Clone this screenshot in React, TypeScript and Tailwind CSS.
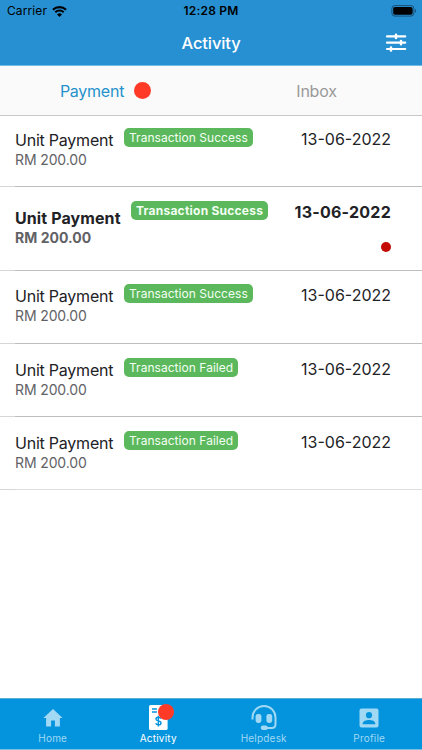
type Payment = { status: string; unread?: boolean; box: string };

const payments: Payment[] = [
  { status: "Transaction Success", box: "h-[70px] pt-[12px]" },
  { status: "Transaction Success", unread: true, box: "h-[83px] pt-[14px] font-bold" },
  { status: "Transaction Success", box: "h-[72px] pt-[13px]" },
  { status: "Transaction Failed", box: "h-[72px] pt-[14px]" },
  { status: "Transaction Failed", box: "h-[72px] pt-[14px]" },
];

function StatusBar() {
  return (
    <div className="grid h-[22px] grid-cols-3 items-center px-[7px] text-black">
      <div className="flex items-center gap-[5px] text-[12px] leading-[22px] tracking-[0.1px]">
        <span>Carrier</span>
        <svg width="15" height="11" viewBox="0 0 15 11" fill="none" stroke="currentColor">
          <path d="M.9 3.8a9.5 9.5 0 0 1 13.2 0" strokeWidth="2.1" />
          <path d="M3.3 6.3a6 6 0 0 1 8.4 0" strokeWidth="2" />
          <path d="M7.5 11 5 8.4a3.6 3.6 0 0 1 5 0z" fill="currentColor" stroke="none" />
        </svg>
      </div>
      <span className="text-center text-[12px] font-semibold tracking-[0.2px]">12:28 PM</span>
      <svg className="mr-[-2px] justify-self-end" width="26" height="12" viewBox="0 0 26 12">
        <rect x=".9" y=".6" width="22" height="10.5" rx="3" fill="none" stroke="#174f76" />
        <rect x="2.2" y="1.9" width="19.4" height="7.9" rx="1.8" />
        <path d="M24 4v3.8c1.6-.6 1.6-3.2 0-3.8z" fill="#174f76" />
      </svg>
    </div>
  );
}

function FilterIcon() {
  return (
    <svg width="22" height="20" viewBox="0 0 22 20" stroke="white" strokeLinecap="round">
      <path d="M2 3.4h18.2M2 9.7h18.2M2 16h18.2" strokeWidth="2.2" />
      <path d="M11 1.8v3.2M16 8.1v3.2M6 14.4v3.2" strokeWidth="2.5" />
    </svg>
  );
}

function PaymentRow({ status, unread, box }: Payment) {
  return (
    <div className={`flex ${box} pr-[31px] pl-[15px]`}>
      <div className={unread ? "w-[116px] pt-[6px]" : "w-[109px] pt-px"}>
        <div className={`text-[16px] leading-[22px] whitespace-nowrap text-[#222226] ${unread ? "tracking-[0.1px]" : "tracking-[-0.23px]"}`}>
          Unit Payment
        </div>
        <div className={`text-[14px] leading-[17px] whitespace-nowrap text-[#626266] ${unread ? "tracking-[0.03px]" : "tracking-[-0.12px]"}`}>RM 200.00</div>
      </div>
      <span className={`flex h-[19px] items-center rounded-[5px] bg-[#5cb85c] px-[5px] text-[12px] leading-[19px] whitespace-nowrap text-[#f3fff3] ${unread ? "tracking-[0.24px]" : "tracking-[0.04px]"}`}>
        {status}
      </span>
      <div className={`ml-auto flex flex-col items-end text-[16px] text-[#222226] ${unread ? "leading-[23px] tracking-[0.24px]" : "leading-[23px]"}`}>
        <span className="whitespace-nowrap">13-06-2022</span>
        {unread && <span className="mt-[18px] size-[10px] rounded-full bg-[#c40a05]" />}
      </div>
    </div>
  );
}

function HomeIcon() {
  return (
    <svg width="20" height="18" viewBox="0 0 20 18" fill="currentColor">
      <path d="M10 0 .4 9h2.7v8.4h5v-6h3.8v6h5V9h2.7z" />
    </svg>
  );
}

function ReceiptIcon() {
  return (
    <div className="relative h-[25px] w-[19px]">
      <svg width="19" height="25" viewBox="0 0 19 25">
        <rect width="18.6" height="25" rx="1.6" fill="white" />
        <path d="M3 4h5M3 7h5" stroke="#0494dd" strokeWidth="1.4" />
        <path d="M11.8 13.6c-.5-1-1.4-1.3-2.5-1.3-1.5 0-2.4.7-2.4 1.8 0 2.7 5.1 1 5.1 3.8 0 1.2-1 1.9-2.5 1.9-1.4 0-2.4-.5-2.8-1.6M9.3 10.8v10.8" fill="none" stroke="#0494dd" strokeWidth="1.4" />
      </svg>
      <span className="absolute top-[-1px] left-[9.5px] size-[16px] rounded-full bg-[#ff3b28]" />
    </div>
  );
}

function HeadsetIcon() {
  return (
    <svg width="26" height="26" viewBox="0 0 26 26" fill="currentColor">
      <path d="M1.5 14.5v-2a11.2 11.2 0 0 1 23 0v6.8q0 3.7-3.6 3.7h-5" fill="none" stroke="currentColor" strokeWidth="2" />
      <rect x="4.6" y="8.9" width="5.8" height="9" rx="2.3" />
      <rect x="15.4" y="8.9" width="5.8" height="9" rx="2.3" />
      <rect x="9.8" y="20.6" width="7" height="4.4" rx="2.1" />
    </svg>
  );
}

function ProfileIcon() {
  return (
    <svg width="20" height="20" viewBox="0 0 20 20">
      <rect x=".5" y=".5" width="19" height="19" rx="2" fill="currentColor" />
      <circle cx="10" cy="7.2" r="3.1" fill="#0494dd" />
      <path d="M3.8 16.2v-1c0-2.1 3.3-3.3 6.2-3.3s6.2 1.2 6.2 3.3v1z" fill="#0494dd" />
    </svg>
  );
}

const tabs = [
  { label: "Home", Icon: HomeIcon },
  { label: "Activity", Icon: ReceiptIcon, active: true },
  { label: "Helpdesk", Icon: HeadsetIcon },
  { label: "Profile", Icon: ProfileIcon },
];

export default function App() {
  return (
    <div className="flex h-[750px] w-[422px] flex-col overflow-hidden bg-white font-[Inter,sans-serif]">
      <header className="h-[66px] border-b border-[#74bde8] bg-[#2790d2]">
        <StatusBar />
        <div className="grid h-[42px] grid-cols-[1fr_auto_1fr] items-center px-[15px] text-white">
          <span />
          <h1 className="text-[16.5px] font-medium tracking-[-0.1px]">Activity</h1>
          <div className="justify-self-end"><FilterIcon /></div>
        </div>
      </header>
      <nav className="grid h-[50px] grid-cols-2 border-b border-[#c9c7c7] bg-[#fafafa] text-[16px] tracking-[-0.25px]">
        <div className="flex items-center justify-center gap-[10px] text-[#2592cb]">
          <span>Payment</span>
          <span className="size-[17px] rounded-full bg-[#ff3b28]" />
        </div>
        <div className="flex items-center justify-center text-[#999]">Inbox</div>
      </nav>
      <ul className="flex-1">
        {payments.map((p, i) => (
          <li key={i}>
            <PaymentRow {...p} />
            <div className="flex h-px">
              <div className="w-[15px] bg-[#d6d6d6]" />
              <div className={i === 4 ? "flex-1 bg-[#dedede]" : "flex-1 bg-[#bebebe]"} />
            </div>
          </li>
        ))}
      </ul>
      <footer className="grid h-[52px] grid-cols-4 border-y border-t-[#5badd5] border-b-[#78bfe4] bg-[#0494dd]">
        {tabs.map(({ label, Icon, active }) => (
          <div key={label} className={`flex flex-col items-center ${active ? "text-white" : "text-[#a1d8f4]"}`}>
            <div className="flex h-[33px] items-center pt-[4px]"><Icon /></div>
            <span className="text-[10px] leading-[12px] tracking-[0.2px]">{label}</span>
          </div>
        ))}
      </footer>
    </div>
  );
}
